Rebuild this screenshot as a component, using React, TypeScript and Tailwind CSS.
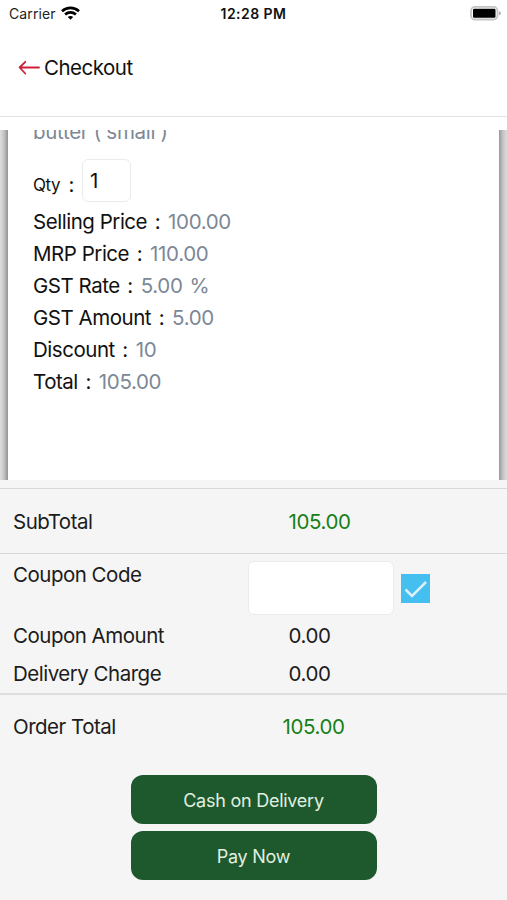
import type { ReactNode } from "react";

function Detail({ label, value }: { label: string; value: string }) {
  return (
    <div className="flex h-8 items-center text-[20.5px]">
      <span className="tracking-[-0.47px]">{label}</span>
      <span className="w-[21px] text-center">:</span>
      <span className="tracking-[-0.35px] text-[#7c8896] [word-spacing:1.5px]">{value}</span>
    </div>
  );
}

function SummaryRow({ label, className, children }: { label: string; className: string; children?: ReactNode }) {
  return (
    <div className={"flex items-center pl-[13px] text-[20.5px] text-[#1c1c1c] " + className}>
      <span className="w-[275.5px] shrink-0 tracking-[-0.5px]">{label}</span>
      <span className="tracking-[-0.4px]">{children}</span>
    </div>
  );
}

function StatusBar() {
  return (
    <div className="grid h-[27px] shrink-0 grid-cols-3 items-center">
      <div className="flex items-center gap-[5px] pl-[9px] text-[14px] text-[#222]">
        <span className="w-[47px] tracking-[0.1px]">Carrier</span>
        <svg className="-mt-px" width="19" height="14" viewBox="0 0 19 14" fill="none" stroke="#000" strokeWidth="2.7">
          <path d="M1 5.2C5.8.8 13.2.8 18 5.2" />
          <path d="M4.1 8.5C7.2 5.7 11.8 5.7 14.9 8.5" />
          <path d="M6.8 11 9.5 13.8 12.2 11C10.7 9.7 8.3 9.7 6.8 11Z" fill="#000" stroke="none" />
        </svg>
      </div>
      <span className="text-center text-[14px] font-semibold tracking-[0.45px] text-[#111]">12:28 PM</span>
      <div className="flex items-center justify-end pr-[6px]">
        <svg width="31" height="15" viewBox="0 0 31 15">
          <rect x="1" y="0.9" width="26.5" height="12.6" rx="4" fill="#fff" stroke="#c4c4c4" strokeWidth="1.8" />
          <rect x="3" y="2.7" width="22.5" height="9" rx="1.2" fill="#000" />
          <path d="M29 5.3Q30.8 5.8 30.8 7.3T29 9.3Z" fill="#aaa" />
        </svg>
      </div>
    </div>
  );
}

export default function App() {
  return (
    <div className="flex h-[900px] w-[507px] flex-col overflow-hidden bg-white font-[Inter,sans-serif] text-[#111]">
      <StatusBar />
      <header className="flex h-[90px] shrink-0 items-center border-b border-[#e2e2e2] pb-[8px] pl-[18px]">
        <svg className="mr-[4px]" width="22" height="16" viewBox="0 0 22 16" fill="none" stroke="#cf1f38" strokeWidth="1.8" strokeLinecap="round" strokeLinejoin="round">
          <path d="M21 7.5H1.8M7.3 1.8 1.6 7.5l5.7 6" />
        </svg>
        <h1 className="pt-[2px] text-[20.5px] tracking-[-0.5px]">Checkout</h1>
      </header>

      <main className="mt-[13px] flex h-[350px] shrink-0 overflow-hidden">
        <div className="w-[8px] shrink-0 bg-linear-to-r from-[#dedede] via-[#c4c4c4] to-[#929292]" />
        <section className="flex-1 pl-[25px]">
          <div className="-mt-[12px] h-[27px] text-[20.5px] leading-[28px] tracking-[-0.3px] text-[#7c8896]">butter ( small )</div>
          <div className="mt-[14px] mb-[4px] flex h-[43px]">
            <span className="w-[33px] pt-[13px] text-[17px] leading-[26px] tracking-[-0.4px]">Qty</span>
            <span className="w-[16px] pt-[13px] pl-[2.5px] text-[20.5px] leading-[26px]">:</span>
            <div className="flex h-[43px] w-[49px] items-center rounded-[6px] border border-[#ebebeb] pt-[2px] pl-[7px] text-[20.5px]">1</div>
          </div>
          <Detail label="Selling Price" value="100.00" />
          <Detail label="MRP Price" value="110.00" />
          <Detail label="GST Rate" value="5.00 %" />
          <Detail label="GST Amount" value="5.00" />
          <Detail label="Discount" value="10" />
          <Detail label="Total" value="105.00" />
        </section>
        <div className="w-[8px] shrink-0 bg-linear-to-r from-[#999] via-[#c4c4c4] to-[#dcdcdc]" />
      </main>

      <footer className="flex flex-1 flex-col bg-[#f5f5f5] pt-[8px]">
        <SummaryRow label="SubTotal" className="h-[66px] border-y border-[#d8d8d8] pt-[3px]">
          <span className="text-[#168016]">105.00</span>
        </SummaryRow>
        <div className="flex h-[62px] pt-[7px] pl-[13px] text-[20.5px] text-[#1c1c1c]">
          <span className="w-[235px] shrink-0 leading-[28px] tracking-[-0.5px]">Coupon Code</span>
          <div className="h-[54px] w-[146px] rounded-[6px] border border-[#ebebeb] bg-white" />
          <div className="mt-[13px] ml-[7px] size-[29px] bg-[#45bfef]">
            <svg width="29" height="29" viewBox="0 0 29 29" fill="none" stroke="#dceffa" strokeWidth="2.5">
              <path d="M4.5 15.5 11 22 25 8" />
            </svg>
          </div>
        </div>
        <SummaryRow label="Coupon Amount" className="h-[40px]">0.00</SummaryRow>
        <SummaryRow label="Delivery Charge" className="h-[39px] border-b-2 border-[#dedede]">0.00</SummaryRow>
        <SummaryRow label="Order Total" className="h-[65px] pb-[1px]">
          <span className="-ml-[6px] text-[#168016]">105.00</span>
        </SummaryRow>
        <div className="mt-[15px] flex flex-col items-center gap-[7px] text-[18px] tracking-[-0.25px] text-[#e0efe0]">
          <button className="h-[49px] w-[246px] rounded-[12px] bg-[#1e592d] pt-px">Cash on Delivery</button>
          <button className="h-[49px] w-[246px] rounded-[12px] bg-[#1e592d] pt-px">Pay Now</button>
        </div>
      </footer>
    </div>
  );
}
